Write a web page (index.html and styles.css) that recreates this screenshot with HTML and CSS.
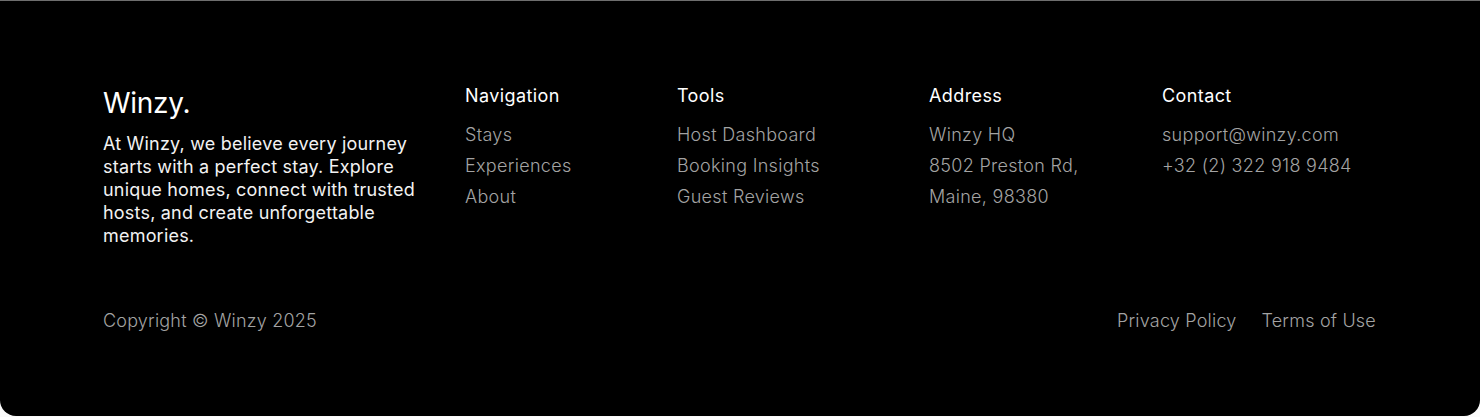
FILE: index.html
```html
<!DOCTYPE html>
<html lang="en">
<head>
  <meta charset="UTF-8">
  <title>Winzy</title>
  <meta name="viewport" content="width=device-width, initial-scale=1.0">
  <link rel="stylesheet" href="styles.css">
</head>
<body>
  <footer class="footer">
    <div class="footer-top">
      <div class="brand">
        <h2 class="logo">Winzy.</h2>
        <p class="about">At Winzy, we believe every journey starts with a perfect stay. Explore unique homes, connect with trusted hosts, and create unforgettable memories.</p>
      </div>
      <div class="col">
        <h3>Navigation</h3>
        <ul>
          <li><a href="#">Stays</a></li>
          <li><a href="#">Experiences</a></li>
          <li><a href="#">About</a></li>
        </ul>
      </div>
      <div class="col">
        <h3>Tools</h3>
        <ul>
          <li><a href="#">Host Dashboard</a></li>
          <li><a href="#">Booking Insights</a></li>
          <li><a href="#">Guest Reviews</a></li>
        </ul>
      </div>
      <div class="col">
        <h3>Address</h3>
        <ul>
          <li>Winzy HQ</li>
          <li>8502 Preston Rd,</li>
          <li>Maine, 98380</li>
        </ul>
      </div>
      <div class="col">
        <h3>Contact</h3>
        <ul>
          <li><a href="#">support@winzy.com</a></li>
          <li><a href="#">+32 (2) 322 918 9484</a></li>
        </ul>
      </div>
    </div>
    <div class="footer-bottom">
      <span>Copyright © Winzy 2025</span>
      <div class="legal">
        <a href="#">Privacy Policy</a>
        <a href="#">Terms of Use</a>
      </div>
    </div>
  </footer>
</body>
</html>
```

FILE: styles.css
```css
body {
  margin: 0;
  background: #fafafa;
  font-family: Inter, "Noto Sans", sans-serif;
}
.footer {
  background: #000;
  color: #fff;
  border-top: 1px solid #6e6e6e;
  border-radius: 0 0 16px 16px;
  height: 416px;
  box-sizing: border-box;
  padding: 82px 104px 0 103px;
}
.footer-top {
  display: grid;
  grid-template-columns: 362px 212px 252px 233px 1fr;
}
.logo {
  margin: 0;
  font-size: 28px;
  font-weight: 400;
  line-height: 40px;
  letter-spacing: -0.3px;
}
.about {
  margin: 9px 0 0;
  width: 330px;
  font-size: 18px;
  line-height: 23px;
  letter-spacing: 0.2px;
  color: #f2f2f2;
}
.col h3 {
  margin: 0;
  font-size: 18px;
  font-weight: 400;
  line-height: 26px;
  letter-spacing: 0.4px;
}
.col ul {
  list-style: none;
  margin: 10px 0 0;
  padding: 0;
}
.col li {
  font-size: 18px;
  font-weight: 300;
  line-height: 31px;
  letter-spacing: 0.3px;
  color: #a3a3a3;
}
.col a,
.footer-bottom a {
  color: #a3a3a3;
  text-decoration: none;
}
.footer-bottom {
  display: flex;
  justify-content: space-between;
  align-items: center;
  margin-top: 61px;
  font-size: 18px;
  font-weight: 300;
  line-height: 26px;
  letter-spacing: 0.2px;
  color: #a3a3a3;
}
.legal {
  display: flex;
  gap: 25px;
}
```
